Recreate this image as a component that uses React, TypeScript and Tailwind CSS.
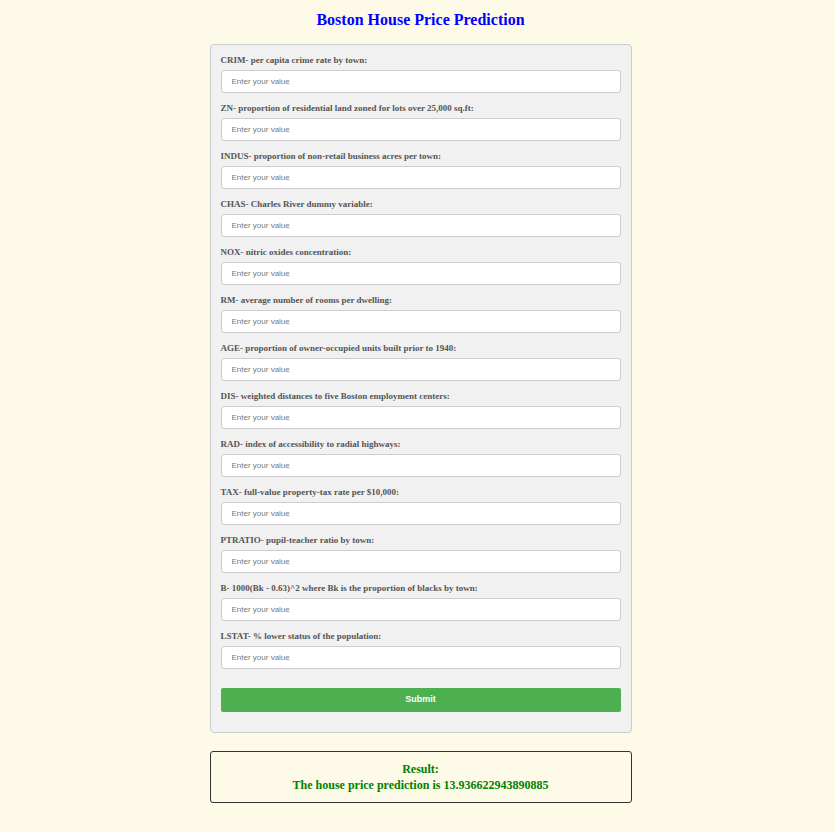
const fields = [
  "CRIM- per capita crime rate by town:",
  "ZN- proportion of residential land zoned for lots over 25,000 sq.ft:",
  "INDUS- proportion of non-retail business acres per town:",
  "CHAS- Charles River dummy variable:",
  "NOX- nitric oxides concentration:",
  "RM- average number of rooms per dwelling:",
  "AGE- proportion of owner-occupied units built prior to 1940:",
  "DIS- weighted distances to five Boston employment centers:",
  "RAD- index of accessibility to radial highways:",
  "TAX- full-value property-tax rate per $10,000:",
  "PTRATIO- pupil-teacher ratio by town:",
  "B- 1000(Bk - 0.63)^2 where Bk is the proportion of blacks by town:",
  "LSTAT- % lower status of the population:",
];

export default function App() {
  return (
    <div className="min-h-[832px] bg-[#fefae8] pl-[6px] pt-[9px] pb-6 font-['Liberation_Serif',serif]">
      <h1 className="text-center text-[16px] leading-[22px] font-bold text-[#0000ff]">
        Boston House Price Prediction
      </h1>
      <form
        className="mx-auto mt-[13px] w-[422px] rounded border border-[#cccccc] bg-[#f1f1f1] px-[10px] pt-[9px] pb-5"
        onSubmit={(e) => e.preventDefault()}
      >
        {fields.map((label) => (
          <div key={label} className="mb-[9px]">
            <label className="mb-1 block text-[9px] leading-3 font-bold text-[#555]">
              {label}
            </label>
            <input
              type="text"
              placeholder="Enter your value"
              className="block h-[23px] w-full rounded-[3px] border border-[#cccccc] bg-white px-[10px] font-['Liberation_Sans',sans-serif] text-[8px] text-[#333] placeholder:text-[#777] outline-none"
            />
          </div>
        ))}
        <button
          type="submit"
          className="mt-[19px] block h-6 w-full rounded-[2px] bg-[#4caf50] font-['Liberation_Sans',sans-serif] text-[9px] font-bold text-white"
        >
          Submit
        </button>
      </form>
      <div className="mx-auto mt-[18px] w-[422px] rounded-[3px] border border-[#333] py-[9px] text-center text-[12px] leading-4 font-bold text-[#008000]">
        <div>Result:</div>
        <div>The house price prediction is 13.936622943890885</div>
      </div>
    </div>
  );
}
